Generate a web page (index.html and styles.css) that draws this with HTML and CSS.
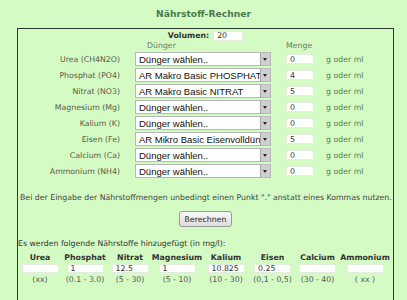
FILE: index.html
```html
<!DOCTYPE html>
<html lang="de">
<head>
<meta charset="utf-8">
<title>Nährstoff-Rechner</title>
<link rel="stylesheet" href="styles.css">
</head>
<body>
<h1 class="title">Nährstoff-Rechner</h1>
<div class="panel">
  <div class="volume"><span class="volume-label">Volumen:</span><input class="volume-input" value="20"></div>
  <div class="form-grid">
    <div></div><div class="col-head head-fert">Dünger</div><div class="col-head">Menge</div><div></div>

    <div class="label">Urea (CH4N2O)</div>
    <div class="select"><select><option>Dünger wählen..</option></select><span class="arrow"></span></div>
    <input class="amount" value="0"><div class="unit">g oder ml</div>

    <div class="label">Phosphat (PO4)</div>
    <div class="select"><select><option>AR Makro Basic PHOSPHAT</option></select><span class="arrow"></span></div>
    <input class="amount" value="4"><div class="unit">g oder ml</div>

    <div class="label">Nitrat (NO3)</div>
    <div class="select"><select><option>AR Makro Basic NITRAT</option></select><span class="arrow"></span></div>
    <input class="amount" value="5"><div class="unit">g oder ml</div>

    <div class="label">Magnesium (Mg)</div>
    <div class="select"><select><option>Dünger wählen..</option></select><span class="arrow"></span></div>
    <input class="amount" value="0"><div class="unit">g oder ml</div>

    <div class="label">Kalium (K)</div>
    <div class="select"><select><option>Dünger wählen..</option></select><span class="arrow"></span></div>
    <input class="amount" value="0"><div class="unit">g oder ml</div>

    <div class="label">Eisen (Fe)</div>
    <div class="select"><select><option>AR Mikro Basic Eisenvolldünger</option></select><span class="arrow"></span></div>
    <input class="amount" value="5"><div class="unit">g oder ml</div>

    <div class="label">Calcium (Ca)</div>
    <div class="select"><select><option>Dünger wählen..</option></select><span class="arrow"></span></div>
    <input class="amount" value="0"><div class="unit">g oder ml</div>

    <div class="label">Ammonium (NH4)</div>
    <div class="select"><select><option>Dünger wählen..</option></select><span class="arrow"></span></div>
    <input class="amount" value="0"><div class="unit">g oder ml</div>
  </div>

  <p class="note">Bei der Eingabe der Nährstoffmengen unbedingt einen Punkt "." anstatt eines Kommas nutzen.</p>
  <div class="actions"><button class="calc">Berechnen</button></div>
  <p class="intro">Es werden folgende Nährstoffe hinzugefügt (in mg/l):</p>

  <div class="results">
    <div class="rh">Urea</div><div class="rh">Phosphat</div><div class="rh">Nitrat</div><div class="rh">Magnesium</div><div class="rh">Kalium</div><div class="rh">Eisen</div><div class="rh">Calcium</div><div class="rh">Ammonium</div>
    <div class="rc"><input class="rin" value=""></div>
    <div class="rc"><input class="rin" value="1"></div>
    <div class="rc"><input class="rin" value="12.5"></div>
    <div class="rc"><input class="rin" value="1"></div>
    <div class="rc"><input class="rin" value="10.825"></div>
    <div class="rc"><input class="rin" value="0.25"></div>
    <div class="rc"><input class="rin" value=""></div>
    <div class="rc"><input class="rin" value=""></div>
    <div class="rr">(xx)</div><div class="rr">(0.1 - 3.0)</div><div class="rr">(5 - 30)</div><div class="rr">(5 - 10)</div><div class="rr">(10 - 30)</div><div class="rr">(0,1 - 0,5)</div><div class="rr">(30 - 40)</div><div class="rr">( xx )</div>
  </div>
</div>
</body>
</html>
```

FILE: styles.css
```css
html, body {
  margin: 0;
  padding: 0;
  background: #d4fbc4;
  height: 100%;
  overflow: hidden;
}
body {
  display: flex;
  flex-direction: column;
  font-family: "DejaVu Sans", Verdana, sans-serif;
  font-size: 7.8px;
  color: #555;
}
.title {
  margin: 0;
  padding-top: 8px;
  height: 28px;
  flex: none;
  box-sizing: border-box;
  text-align: center;
  font-size: 9.2px;
  font-weight: bold;
  color: #4c7a4c;
}
.panel {
  flex: 1;
  margin: 0 13px 0 17px;
  border: 1px solid #2f3a2f;
  border-bottom: none;
  box-sizing: border-box;
}
.volume {
  display: flex;
  justify-content: center;
  align-items: center;
  gap: 4px;
  padding-top: 1px;
  height: 11px;
}
.volume-label {
  font-weight: bold;
  color: #333;
}
.volume-input,
.amount,
.rin {
  font-family: "DejaVu Sans", Verdana, sans-serif;
  font-size: 7.8px;
  color: #333;
  background: #fff;
  border: 1px solid #e4ece0;
  padding: 0 0 0 3px;
  box-sizing: border-box;
  outline: none;
}
.volume-input {
  width: 30px;
  height: 10px;
}
.form-grid {
  display: grid;
  grid-template-columns: 102px 136px 28px auto;
  column-gap: 15px;
  row-gap: 2px;
  align-items: center;
  padding-top: 0;
}
.col-head {
  color: #6a7a5a;
  height: 9px;
  line-height: 9px;
}
.head-fert {
  padding-left: 12px;
}
.label {
  text-align: right;
  color: #5a5a44;
}
.select {
  position: relative;
  height: 14px;
  border: 1px solid #b8b8b8;
  box-sizing: border-box;
  background: #fff;
  overflow: hidden;
}
.select select {
  appearance: none;
  -webkit-appearance: none;
  border: none;
  background: #fff;
  margin: 0;
  padding: 0 0 0 3px;
  width: 100%;
  height: 12px;
  font-family: "Liberation Sans", Arial, sans-serif;
  font-size: 9.5px;
  color: #111;
  outline: none;
}
.arrow {
  position: absolute;
  top: 0;
  right: 0;
  width: 10px;
  height: 12px;
  background: #cfcfcf;
  border-left: 1px solid #a8a8a8;
  box-sizing: border-box;
}
.arrow::after {
  content: "";
  position: absolute;
  left: 2px;
  top: 5px;
  border-left: 2.5px solid transparent;
  border-right: 2.5px solid transparent;
  border-top: 3px solid #222;
}
.amount {
  width: 28px;
  height: 10px;
}
.unit {
  color: #5b7a4b;
  margin-left: -3px;
}
.note {
  margin: 15px 0 0 2px;
  color: #444;
}
.actions {
  display: flex;
  justify-content: center;
  margin-top: 9px;
}
.calc {
  font-family: "DejaVu Sans", Verdana, sans-serif;
  font-size: 7.8px;
  color: #222;
  height: 16px;
  padding: 0 5px;
  border: 1px solid #9a9a9a;
  border-radius: 3px;
  background: linear-gradient(#fafafa, #dcdcdc);
}
.intro {
  margin: 12px 0 0 0;
  color: #333;
}
.results {
  display: grid;
  grid-template-columns: 44px 46px 44px 50px 48px 45px 45px 50px;
  justify-items: center;
  align-items: center;
  margin-top: 5px;
  row-gap: 2px;
}
.rh {
  font-weight: bold;
  color: #333;
}
.rin {
  width: 37px;
  height: 9px;
}
.rr {
  color: #555;
}
```
